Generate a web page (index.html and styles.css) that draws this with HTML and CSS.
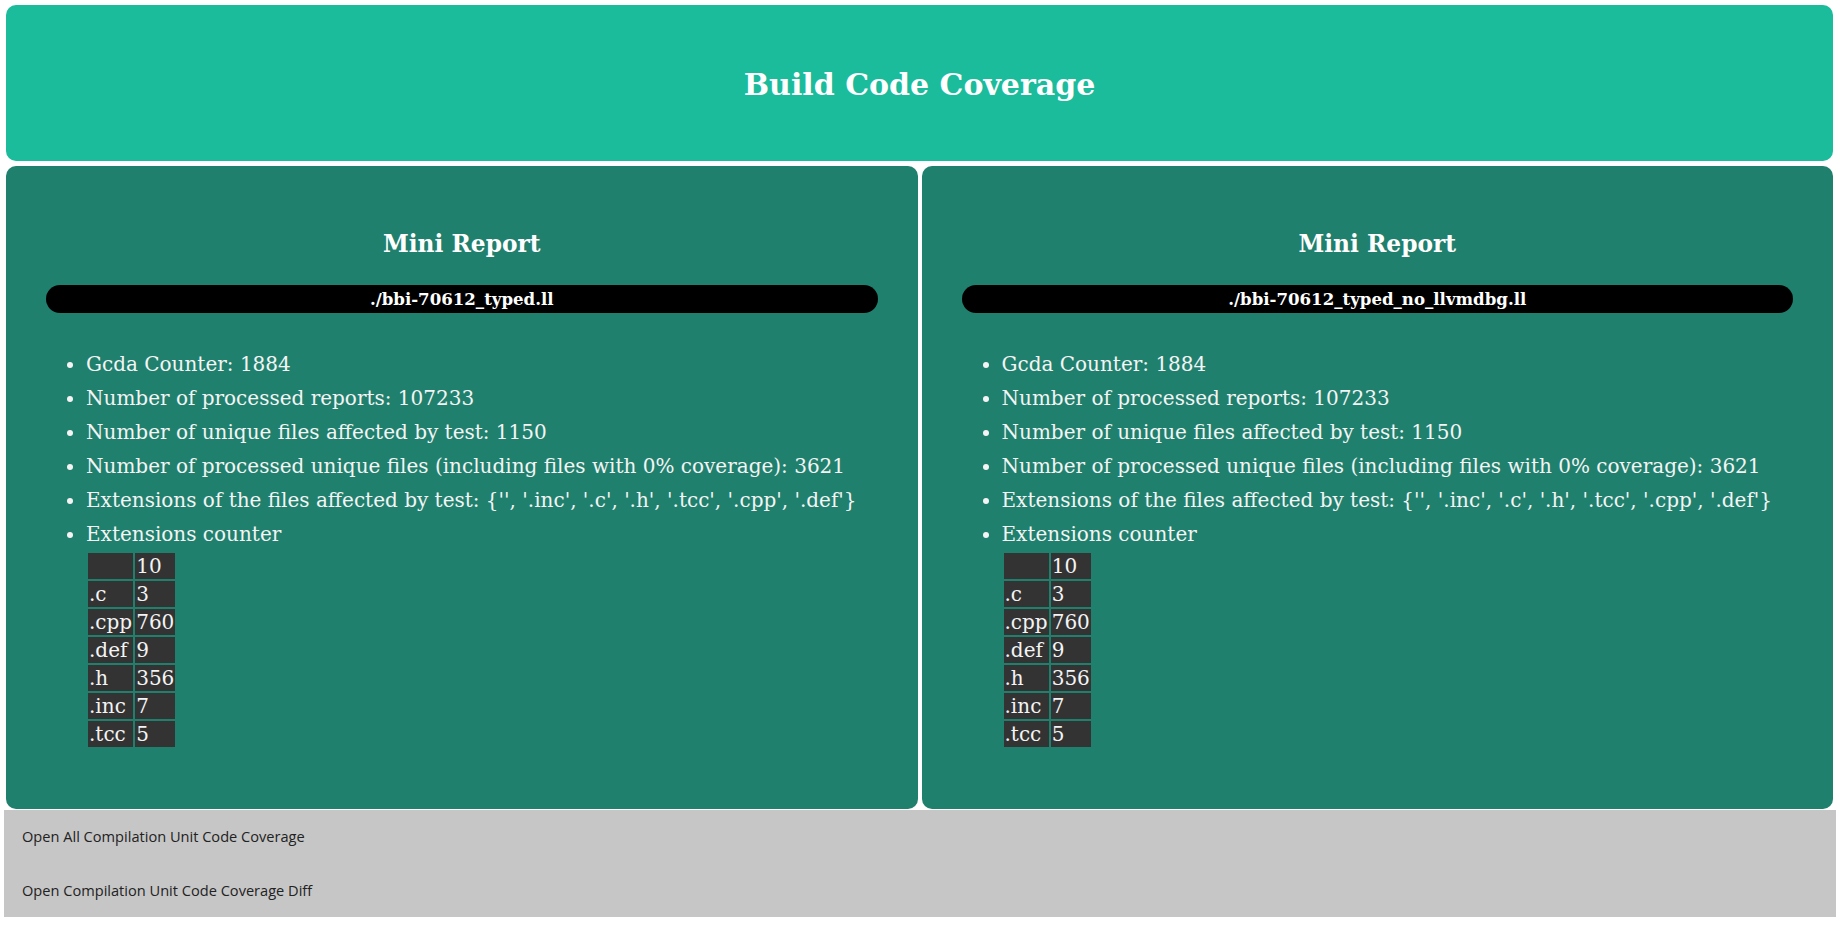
FILE: index.html
```html
<!DOCTYPE html>
<html>
<head>
<meta charset="utf-8">
<title>Build Code Coverage</title>
<link rel="stylesheet" href="styles.css">
</head>
<body>
<div class="page">
  <header class="banner">
    <h1 class="banner-title">Build Code Coverage</h1>
  </header>
  <main class="reports">
    <section class="report">
      <h2 class="report-title">Mini Report</h2>
      <div class="report-file">./bbi-70612_typed.ll</div>
      <ul class="stats">
        <li>Gcda Counter: 1884</li>
        <li>Number of processed reports: 107233</li>
        <li>Number of unique files affected by test: 1150</li>
        <li>Number of processed unique files (including files with 0% coverage): 3621</li>
        <li>Extensions of the files affected by test: {'', '.inc', '.c', '.h', '.tcc', '.cpp', '.def'}</li>
        <li>Extensions counter
          <table class="ext-table">
            <tr><td></td><td>10</td></tr>
            <tr><td>.c</td><td>3</td></tr>
            <tr><td>.cpp</td><td>760</td></tr>
            <tr><td>.def</td><td>9</td></tr>
            <tr><td>.h</td><td>356</td></tr>
            <tr><td>.inc</td><td>7</td></tr>
            <tr><td>.tcc</td><td>5</td></tr>
          </table>
        </li>
      </ul>
    </section>
    <section class="report">
      <h2 class="report-title">Mini Report</h2>
      <div class="report-file">./bbi-70612_typed_no_llvmdbg.ll</div>
      <ul class="stats">
        <li>Gcda Counter: 1884</li>
        <li>Number of processed reports: 107233</li>
        <li>Number of unique files affected by test: 1150</li>
        <li>Number of processed unique files (including files with 0% coverage): 3621</li>
        <li>Extensions of the files affected by test: {'', '.inc', '.c', '.h', '.tcc', '.cpp', '.def'}</li>
        <li>Extensions counter
          <table class="ext-table">
            <tr><td></td><td>10</td></tr>
            <tr><td>.c</td><td>3</td></tr>
            <tr><td>.cpp</td><td>760</td></tr>
            <tr><td>.def</td><td>9</td></tr>
            <tr><td>.h</td><td>356</td></tr>
            <tr><td>.inc</td><td>7</td></tr>
            <tr><td>.tcc</td><td>5</td></tr>
          </table>
        </li>
      </ul>
    </section>
  </main>
  <nav class="links">
    <a class="link" href="#">Open All Compilation Unit Code Coverage</a>
    <a class="link" href="#">Open Compilation Unit Code Coverage Diff</a>
  </nav>
</div>
</body>
</html>
```
FILE: styles.css
```css
html, body {
  margin: 0;
  padding: 0;
  background: #ffffff;
}

body {
  font-family: "DejaVu Serif", serif;
}

.page {
  padding: 5px 8px 0 4px;
  display: flex;
  flex-direction: column;
}

.banner {
  margin: 0 3px 0 2px;
  height: 156px;
  background: #1abc9c;
  border-radius: 10px;
  display: flex;
  align-items: center;
  justify-content: center;
}

.banner-title {
  margin: 0;
  padding-top: 2px;
  color: #ffffff;
  font-size: 30px;
  font-weight: bold;
}

.reports {
  margin: 5px 3px 1px 2px;
  display: flex;
  gap: 4px;
}

.report {
  flex: 1 1 0;
  background: #20806e;
  border-radius: 10px;
  padding: 64px 40px 44px 40px;
  color: #f4f4f4;
}

.report-title {
  margin: 0;
  text-align: center;
  font-size: 23.3px;
  line-height: 28px;
  color: #ffffff;
}

.report-file {
  margin-top: 27px;
  height: 28px;
  line-height: 28px;
  background: #000000;
  border-radius: 14px;
  color: #ffffff;
  text-align: center;
  font-weight: bold;
  font-size: 16.6px;
}

.stats {
  margin: 34px 0 16px 0;
  padding-left: 40px;
  font-size: 20px;
  line-height: 34px;
}

.ext-table {
  border-spacing: 2px;
}

.ext-table td {
  background: #333333;
  color: #f4f4f4;
  padding: 1px 1px;
  line-height: 24px;
  height: 24px;
}

.links {
  background: #c6c6c6;
  display: flex;
  flex-direction: column;
}

.link {
  display: block;
  padding: 17px 18px;
  height: 19.5px;
  line-height: 19.5px;
  font-family: "Open Sans", sans-serif;
  font-size: 14.6px;
  color: #222222;
  text-decoration: none;
}
```
